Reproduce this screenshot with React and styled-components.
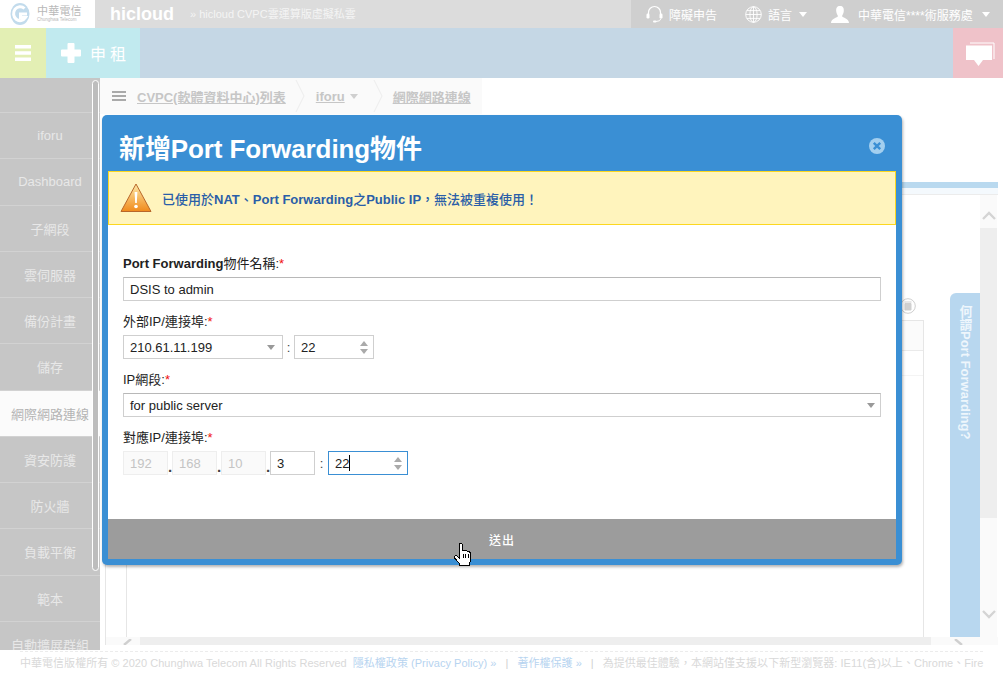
import styled, { createGlobalStyle } from "styled-components";

const Global = createGlobalStyle`
  html, body { margin: 0; padding: 0; background: #fff; }
  * { box-sizing: border-box; }
  body { font-family: "Liberation Sans", "Noto Sans CJK TC", sans-serif; }
`;

const Page = styled.div`
  position: relative;
  width: 1003px;
  height: 680px;
  overflow: hidden;
  background: #fff;
`;

/* top header */
const Header = styled.header`
  display: flex;
  height: 28px;
  background: #dcdcdc;
`;
const Logo = styled.div`
  width: 95px;
  background: #fff;
  display: flex;
  align-items: center;
  gap: 7px;
  padding-left: 10px;
`;
const LogoText = styled.div`
  color: #b8b8b8;
  font-size: 11px;
  line-height: 12px;
  letter-spacing: 0.2px;
  small {
    display: block;
    font-size: 4.5px;
    line-height: 6px;
    letter-spacing: 0;
    white-space: nowrap;
  }
`;
const Brand = styled.div`
  color: #fff;
  font-size: 18px;
  font-weight: bold;
  line-height: 28px;
  margin-left: 15px;
  width: 80px;
`;
const Slogan = styled.div`
  color: #f4f4f4;
  font-size: 11px;
  line-height: 28px;
  flex: 1;
`;
const HeaderRight = styled.div`
  width: 372px;
  background: #cfcfcf;
  display: flex;
  align-items: center;
  padding-left: 15px;
  color: #fff;
  font-size: 12px;
  white-space: nowrap;
`;
const HeaderItem = styled.div`
  display: flex;
  align-items: center;
  gap: ${(p) => p.$gap || 6}px;
  width: ${(p) => p.$width}px;
`;
const Caret = styled.i`
  display: inline-block;
  width: 0;
  height: 0;
  border-left: 4px solid transparent;
  border-right: 4px solid transparent;
  border-top: 5px solid ${(p) => p.$color || "#fff"};
  margin-left: ${(p) => p.$left || 0}px;
`;

/* colour toolbar */
const Toolbar = styled.div`
  display: flex;
  height: 50px;
  background: #c5d7e5;
`;
const MenuTile = styled.div`
  width: 46px;
  background: #e3efb4;
  display: flex;
  align-items: center;
  justify-content: center;
`;
const RentTile = styled.div`
  width: 94px;
  background: #c1eaef;
  display: flex;
  align-items: center;
  gap: 9px;
  padding-left: 15px;
  color: #fff;
  font-size: 16px;
  letter-spacing: 4px;
`;
const ChatTile = styled.div`
  width: 50px;
  margin-left: auto;
  background: #efc2c9;
  display: flex;
  align-items: center;
  justify-content: center;
  padding: 3px 0 0 4px;
`;

/* body */
const Main = styled.div`
  display: grid;
  grid-template-columns: 100px 1fr;
  height: 572px;
`;
const Sidebar = styled.nav`
  position: relative;
  background: #c6c6c6;
  padding-top: 34px;
  overflow: hidden;
`;
const SideItem = styled.div`
  height: 46.25px;
  border-top: 1px solid #d2d2d2;
  display: flex;
  align-items: center;
  justify-content: center;
  font-size: 13px;
  white-space: nowrap;
  color: ${(p) => (p.$active ? "#b4b4b4" : "#e8e8e8")};
  background: ${(p) => (p.$active ? "#fbfbfb" : "transparent")};
`;
const SideScroll = styled.div`
  position: absolute;
  left: 92px;
  top: 2px;
  width: 7px;
  height: 491px;
  border: 1px solid #fff;
  border-radius: 4px;
  background: #bdbdbd;
`;

const Content = styled.div`
  display: flex;
  flex-direction: column;
  min-width: 0;
`;
const Breadcrumb = styled.div`
  width: 382px;
  height: 36px;
  background: #fafafa;
  display: flex;
  align-items: center;
  padding-left: 12px;
  color: #c6c6c6;
  font-size: 13px;
  font-weight: bold;
  white-space: nowrap;
`;
const Crumb = styled.span`
  text-decoration: underline;
  margin-left: ${(p) => p.$left}px;
`;
const CrumbSep = styled.svg`
  width: 10px;
  height: 36px;
  margin-left: ${(p) => p.$left}px;
  flex: none;
`;
const BlueBar = styled.div`
  margin: 68px 5px 0 5px;
  height: 6px;
  background: #b9d9ef;
`;
const PaleBar = styled.div`
  margin: 0 5px;
  height: 7px;
  background: #f4f9fd;
  border-bottom: 1px solid #ececec;
`;
const Panel = styled.div`
  flex: 1;
  margin: 0 5px 5px;
  display: flex;
  flex-direction: column;
  border-left: 1px solid #e6e6e6;
  min-height: 0;
`;
const PanelRow = styled.div`
  flex: 1;
  display: flex;
  min-height: 0;
`;
const TableColumn = styled.div`
  width: 798px;
  margin-left: 20px;
  display: flex;
  flex-direction: column;
`;
const TableTools = styled.div`
  height: 125px;
  display: flex;
  align-items: flex-end;
  justify-content: flex-end;
  padding: 0 8px 6px 0;
`;
const TableBox = styled.div`
  flex: 1;
  border: 1px solid #e6e6e6;
  border-bottom: none;
`;
const TableHead = styled.div`
  height: 30px;
  background: #fbfbfb;
  border-bottom: 1px solid #eaeaea;
`;
const TableLine = styled.div`
  height: 25px;
  border-bottom: 1px solid #f4f4f4;
`;
const HelpTab = styled.div`
  width: 30px;
  height: 344px;
  margin: 98px 0 0 26px;
  background: #b8d7ef;
  border-top-left-radius: 6px;
  color: #eef6fc;
  font-size: 13px;
  font-weight: bold;
  writing-mode: vertical-rl;
  display: flex;
  align-items: center;
  padding-top: 12px;
  white-space: nowrap;
`;
const VScroll = styled.div`
  width: 17px;
  display: flex;
  flex-direction: column;
  background: #fafafa;
`;
const ScrollBtn = styled.div`
  height: ${(p) => p.$height}px;
  display: flex;
  align-items: center;
  justify-content: center;
  padding: ${(p) => p.$pad || "0"};
`;
const VThumb = styled.div`
  height: 290px;
  background: #eeeeee;
`;
const HScroll = styled.div`
  height: 8px;
  display: flex;
  align-items: flex-start;
  background: #fafafa;
  overflow: hidden;
`;
const HThumb = styled.div`
  width: 791px;
  height: 8px;
  margin-left: 8px;
  background: #eeeeee;
`;
const HArrow = styled.svg`
  flex: none;
  margin-left: ${(p) => p.$left}px;
  margin-top: 2px;
`;

/* footer */
const Footer = styled.footer`
  position: absolute;
  left: 0;
  right: 0;
  top: 650px;
  height: 30px;
  background: #fff;
`;
const FooterInner = styled.div`
  margin: 1px 20px 0;
  border-top: 1px dashed #ececec;
  height: 24px;
  line-height: 23px;
  font-size: 11px;
  letter-spacing: 0.03px;
  color: #d9d9d9;
  white-space: nowrap;
  a { color: #b7d4f0; margin-left: 6px; }
  b { font-weight: normal; margin: 0 9px; color: #d0d0d0; }
`;

/* dialog */
const Modal = styled.div`
  position: absolute;
  left: 102px;
  top: 115px;
  width: 800px;
  height: 450px;
  background: #3a8fd4;
  border-radius: 5px;
  box-shadow: 1px 2px 3px rgba(0, 0, 0, 0.3);
  padding: 0 6px 6px;
  display: flex;
  flex-direction: column;
`;
const ModalHead = styled.div`
  height: 56px;
  flex: none;
  display: flex;
  align-items: center;
  justify-content: space-between;
  padding: 6px 11px 0 11px;
  color: #fff;
  font-size: 26px;
  font-weight: bold;
  letter-spacing: -0.1px;
  white-space: nowrap;
`;
const Warning = styled.div`
  height: 54px;
  flex: none;
  background: #fff4bd;
  border: 1px solid #fcd71f;
  display: flex;
  align-items: center;
  gap: 10px;
  padding: 0 0 0 11px;
  color: #2a5ea8;
  font-size: 13px;
  font-weight: 500;
  b { font-weight: bold; }
`;
const Form = styled.div`
  flex: 1;
  background: #fff;
  padding: 29px 15px 0;
  display: flex;
  flex-direction: column;
  gap: 11px;
`;
const Field = styled.div`
  display: flex;
  flex-direction: column;
  gap: 3px;
`;
const Label = styled.div`
  height: 20px;
  line-height: 20px;
  font-size: 13px;
  color: #222;
  b { font-weight: bold; }
  em { color: #f01010; font-style: normal; }
`;
const Row = styled.div`
  display: flex;
  align-items: center;
`;
const InputBox = styled.div`
  position: relative;
  height: 24px;
  width: ${(p) => (p.$width ? `${p.$width}px` : "100%")};
  border: 1px solid ${(p) => (p.$focus ? "#3a8fd4" : p.$off ? "#eeeeee" : "#cfcfcf")};
  border-top-color: ${(p) => (p.$dark ? "#b8b8b8" : "")};
  background: ${(p) => (p.$off ? "#fafafa" : "#fff")};
  color: ${(p) => (p.$off ? "#c4c4c4" : "#222")};
  font-size: 13px;
  line-height: 23px;
  padding-left: 6px;
`;
const Cursor = styled.span`
  display: inline-block;
  width: 1px;
  height: 16px;
  background: #000;
  vertical-align: -3px;
`;
const SelectArrow = styled.i`
  position: absolute;
  right: ${(p) => p.$right}px;
  top: 9px;
  width: 0;
  height: 0;
  border-left: 4px solid transparent;
  border-right: 4px solid transparent;
  border-top: 5px solid #999;
`;
const Spin = styled.div`
  position: absolute;
  right: 5px;
  top: 5px;
  display: flex;
  flex-direction: column;
  gap: 3px;
  &::before, &::after {
    content: "";
    width: 0;
    height: 0;
    border-left: 4.5px solid transparent;
    border-right: 4.5px solid transparent;
  }
  &::before { border-bottom: 5px solid #aaa; }
  &::after { border-top: 5px solid #aaa; }
`;
const Sep = styled.span`
  font-size: ${(p) => (p.$dot ? 15 : 13)}px;
  color: #444;
  width: ${(p) => p.$width}px;
  text-align: center;
  font-weight: ${(p) => (p.$dot ? "bold" : "normal")};
  padding-top: ${(p) => (p.$dot ? 6 : 0)}px;
`;
const Submit = styled.div`
  height: 40px;
  flex: none;
  background: #9c9c9c;
  color: #fff;
  font-size: 12px;
  font-weight: 500;
  display: flex;
  align-items: center;
  justify-content: center;
  letter-spacing: 1px;
`;
const HandCursor = styled.svg`
  position: absolute;
  left: 454px;
  top: 543px;
`;

const menu = ["iforu", "Dashboard", "子網段", "雲伺服器", "備份計畫", "儲存", "網際網路連線", "資安防護", "防火牆", "負載平衡", "範本", "自動擴展群組"];

const Bars = ({ w, h, color, bar }) => (
  <svg width={w} height={h} viewBox={`0 0 ${w} ${h}`} style={{ flex: "none" }}>
    <rect y="0" width={w} height={bar} fill={color} />
    <rect y={(h - bar) / 2} width={w} height={bar} fill={color} />
    <rect y={h - bar} width={w} height={bar} fill={color} />
  </svg>
);

const Chev = ({ dir, color = "#d4d4d4" }) => {
  const d = { up: "M1 8 L7 2 L13 8", down: "M1 2 L7 8 L13 2" }[dir];
  return (
    <svg width="14" height="10" viewBox="0 0 14 10">
      <path d={d} fill="none" stroke={color} strokeWidth="2.4" />
    </svg>
  );
};

export default function App() {
  return (
    <Page>
      <Global />
      <Header>
        <Logo>
          <svg width="20" height="24" viewBox="0 0 20 24" style={{ flex: "none" }}>
            <ellipse cx="10" cy="12" rx="9.5" ry="11" fill="#c2dbec" />
            <path d="M14.5 6.5 A6.5 7 0 1 0 15.5 15.5 H10.5 V12 H17" fill="none" stroke="#fff" strokeWidth="3" />
          </svg>
          <LogoText>
            中華電信
            <small>Chunghwa Telecom</small>
          </LogoText>
        </Logo>
        <Brand>hicloud</Brand>
        <Slogan>» hicloud CVPC雲運算版虛擬私雲</Slogan>
        <HeaderRight>
          <HeaderItem $width={99}>
            <svg width="17" height="18" viewBox="0 0 17 18">
              <path d="M2.5 9 V7.5 A6 6 0 0 1 14.5 7.5 V9" fill="none" stroke="#fff" strokeWidth="1.2" />
              <rect x="0.5" y="8.5" width="3" height="5" rx="1.2" fill="#fff" />
              <rect x="13.5" y="8.5" width="3" height="5" rx="1.2" fill="#fff" />
              <path d="M15 13.5 Q14.5 16.5 10 16.5" fill="none" stroke="#fff" />
              <rect x="7" y="15.5" width="3.5" height="2" rx="1" fill="#fff" />
            </svg>
            <span>障礙申告</span>
          </HeaderItem>
          <HeaderItem $width={86}>
            <svg width="17" height="17" viewBox="0 0 17 17" fill="none" stroke="#fff" strokeWidth="0.9">
              <circle cx="8.5" cy="8.5" r="7.8" />
              <ellipse cx="8.5" cy="8.5" rx="3.6" ry="7.8" />
              <path d="M8.5 0.7 V16.3 M0.7 8.5 H16.3 M1.8 4.6 H15.2 M1.8 12.4 H15.2" />
            </svg>
            <span>語言</span>
            <Caret $left={1} />
          </HeaderItem>
          <HeaderItem $gap={9}>
            <svg width="18" height="17" viewBox="0 0 18 17" fill="#fff">
              <path d="M9 0 C12 0 13 2 12.8 5 C12.6 7.5 11.5 9 11 10 C11.5 11.8 18 12.5 18 17 H0 C0 12.5 6.5 11.8 7 10 C6.5 9 5.4 7.5 5.2 5 C5 2 6 0 9 0 Z" />
            </svg>
            <span>中華電信****術服務處</span>
            <Caret $left={0} />
          </HeaderItem>
        </HeaderRight>
      </Header>

      <Toolbar>
        <MenuTile>
          <Bars w={16} h={16} color="#fff" bar={3.5} />
        </MenuTile>
        <RentTile>
          <svg width="20" height="20" viewBox="0 0 20 20" style={{ flex: "none" }}>
            <path d="M7.5 0 H12.5 Q13.5 0 13.5 1 V6.5 H19 Q20 6.5 20 7.5 V12.5 Q20 13.5 19 13.5 H13.5 V19 Q13.5 20 12.5 20 H7.5 Q6.5 20 6.5 19 V13.5 H1 Q0 13.5 0 12.5 V7.5 Q0 6.5 1 6.5 H6.5 V1 Q6.5 0 7.5 0 Z" fill="#fff" />
          </svg>
          <span>申租</span>
        </RentTile>
        <ChatTile>
          <svg width="30" height="25" viewBox="0 0 30 25">
            <path d="M5 1 H29 V17" fill="none" stroke="#fff" strokeWidth="1" />
            <path d="M1 3.5 H27 V18 H18 L13.5 24 L9 18 H1 Z" fill="#fff" />
          </svg>
        </ChatTile>
      </Toolbar>

      <Main>
        <Sidebar>
          {menu.map((m) => (
            <SideItem key={m} $active={m === "網際網路連線"}>{m}</SideItem>
          ))}
          <SideScroll />
        </Sidebar>
        <Content>
          <Breadcrumb>
            <Bars w={14} h={10} color="#aaaaaa" bar={2} />
            <Crumb $left={11}>CVPC(軟體資料中心)列表</Crumb>
            <CrumbSep $left={9} viewBox="0 0 10 36">
              <path d="M1 2 L9 18 L1 34" fill="none" stroke="#ededed" />
            </CrumbSep>
            <Crumb $left={11}>iforu</Crumb>
            <Caret $color="#cfcfcf" $left={5} />
            <CrumbSep $left={15} viewBox="0 0 10 36">
              <path d="M1 2 L9 18 L1 34" fill="none" stroke="#ededed" />
            </CrumbSep>
            <Crumb $left={10}>網際網路連線</Crumb>
          </Breadcrumb>
          <BlueBar />
          <PaleBar />
          <Panel>
            <PanelRow>
              <TableColumn>
                <TableTools>
                  <svg width="16" height="16" viewBox="0 0 16 16">
                    <circle cx="8" cy="8" r="7.3" fill="none" stroke="#cfcfcf" />
                    <path d="M5 5.5 H11 V12 H5 Z M4.5 4 H11.5" fill="#d0d0d0" stroke="#d0d0d0" />
                  </svg>
                </TableTools>
                <TableBox>
                  <TableHead />
                  <TableLine />
                </TableBox>
              </TableColumn>
              <HelpTab>何謂Port Forwarding?</HelpTab>
              <VScroll>
                <ScrollBtn $height={33} $pad="9px 0 0"><Chev dir="up" /></ScrollBtn>
                <VThumb />
                <ScrollBtn $height={119} $pad="73px 0 0"><Chev dir="down" /></ScrollBtn>
              </VScroll>
            </PanelRow>
            <HScroll>
              <HArrow $left={17} width="9" height="6" viewBox="0 0 9 6">
                <path d="M8 0 L1 6" stroke="#cfcfcf" strokeWidth="2.4" />
              </HArrow>
              <HThumb />
              <HArrow $left={23} width="9" height="6" viewBox="0 0 9 6">
                <path d="M1 0 L8 6" stroke="#cfcfcf" strokeWidth="2.4" />
              </HArrow>
            </HScroll>
          </Panel>
        </Content>
      </Main>

      <Footer>
        <FooterInner>
          中華電信版權所有 © 2020 Chunghwa Telecom All Rights Reserved
          <a>隱私權政策 (Privacy Policy) »</a>
          <b>|</b>
          <a style={{ marginLeft: 0 }}>著作權保護 »</a>
          <b>|</b>
          為提供最佳體驗，本網站僅支援以下新型瀏覽器: IE11(含)以上、Chrome、Fire
        </FooterInner>
      </Footer>

      <Modal>
        <ModalHead>
          <span>新增Port Forwarding物件</span>
          <svg width="16" height="16" viewBox="0 0 16 16">
            <circle cx="8" cy="8" r="8" fill="#a3cfef" />
            <path d="M4.8 4.8 L11.2 11.2 M11.2 4.8 L4.8 11.2" stroke="#3a8fd4" strokeWidth="2.4" />
          </svg>
        </ModalHead>
        <Warning>
          <svg width="32" height="30" viewBox="0 0 32 30" style={{ flex: "none" }}>
            <defs>
              <linearGradient id="warn" x1="0" y1="0" x2="0" y2="1">
                <stop offset="0" stopColor="#fde9a8" />
                <stop offset="1" stopColor="#f08a1c" />
              </linearGradient>
            </defs>
            <path d="M16 1 L31 28.5 H1 Z" fill="url(#warn)" stroke="#b8672a" strokeLinejoin="round" />
            <path d="M14.6 9 H17.4 L16.8 20 H15.2 Z" fill="#fff" />
            <circle cx="16" cy="23.5" r="1.8" fill="#fff" />
          </svg>
          <span>已使用於<b>NAT</b>、<b>Port Forwarding</b>之<b>Public IP</b>，無法被重複使用！</span>
        </Warning>
        <Form>
          <Field>
            <Label><b>Port Forwarding</b>物件名稱:<em>*</em></Label>
            <InputBox $dark>DSIS to admin</InputBox>
          </Field>
          <Field>
            <Label>外部IP/連接埠:<em>*</em></Label>
            <Row>
              <InputBox $width={160}>210.61.11.199<SelectArrow $right={7} /></InputBox>
              <Sep $width={11}>:</Sep>
              <InputBox $width={80}>22<Spin /></InputBox>
            </Row>
          </Field>
          <Field>
            <Label>IP網段:<em>*</em></Label>
            <InputBox $dark>for public server<SelectArrow $right={5} /></InputBox>
          </Field>
          <Field>
            <Label>對應IP/連接埠:<em>*</em></Label>
            <Row>
              <InputBox $width={45} $off>192</InputBox>
              <Sep $width={4} $dot>.</Sep>
              <InputBox $width={45} $off>168</InputBox>
              <Sep $width={4} $dot>.</Sep>
              <InputBox $width={45} $off>10</InputBox>
              <Sep $width={4} $dot>.</Sep>
              <InputBox $width={45}>3</InputBox>
              <Sep $width={13}>:</Sep>
              <InputBox $width={80} $focus>22<Cursor /><Spin /></InputBox>
            </Row>
          </Field>
        </Form>
        <Submit>送出</Submit>
      </Modal>

      <HandCursor width="18" height="23" viewBox="0 0 18 23" shapeRendering="crispEdges">
        <path d="M5.5 1.5 Q5.5 0.5 6.5 0.5 Q8.5 0.5 8.5 1.5 V7.5 Q10 6.5 11 8 Q12.5 7 13.5 8.5 Q15.5 8 16.5 10 V17 L15 22.5 H6 L5 20 L1 15.5 Q0 13.5 1.5 12.5 Q3 12.5 5.5 15 Z" fill="#fff" stroke="#000" />
        <path d="M9 11 V15 M11.5 11 V15 M14 11 V15" stroke="#000" fill="none" />
      </HandCursor>
    </Page>
  );
}
